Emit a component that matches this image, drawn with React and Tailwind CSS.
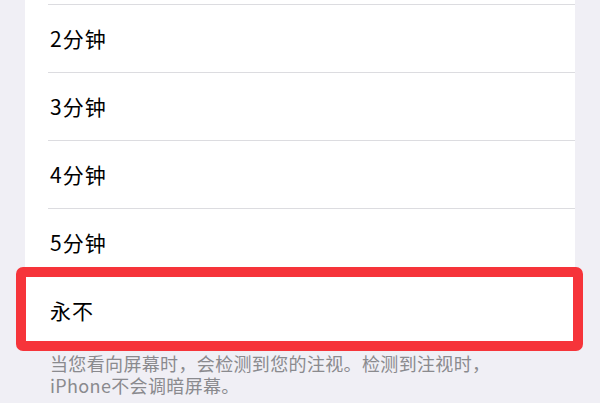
import React from 'react';

const options = ['2分钟', '3分钟', '4分钟', '5分钟'];

export default function App() {
  return (
    <div
      className="h-[403px] w-[600px] overflow-hidden bg-[#f0eff5]"
      style={{ fontFamily: '"Noto Sans CJK SC", "Noto Sans", sans-serif' }}
    >
      {/* options list */}
      <div className="ml-[25px] w-[550px] bg-white">
        {/* tail of the row above */}
        <div className="h-[4px]" />
        {options.map((label) => (
          <div key={label} className="ml-[23px] flex h-[68px] items-center border-t border-[#dcdce0] pl-[2px] text-[21px] tracking-[1px] text-black">
            {label}
          </div>
        ))}
        <div className="relative ml-[23px] flex h-[68px] items-center border-t border-[#dcdce0] pl-[2px] text-[21px] tracking-[1px] text-black">
          永不
          {/* highlight frame */}
          <div className="pointer-events-none absolute -top-[10px] -bottom-[7px] -left-[32px] -right-[8px] rounded-[7px] border-[10px] border-[#f6343a]" />
        </div>
      </div>

      <p className="ml-[50px] mt-[8px] w-[500px] text-[18px] leading-[22px] tracking-[0.35px] text-[#8a8a8e]">
        当您看向屏幕时，会检测到您的注视。检测到注视时，
        <br />
        iPhone不会调暗屏幕。
      </p>
    </div>
  );
}
